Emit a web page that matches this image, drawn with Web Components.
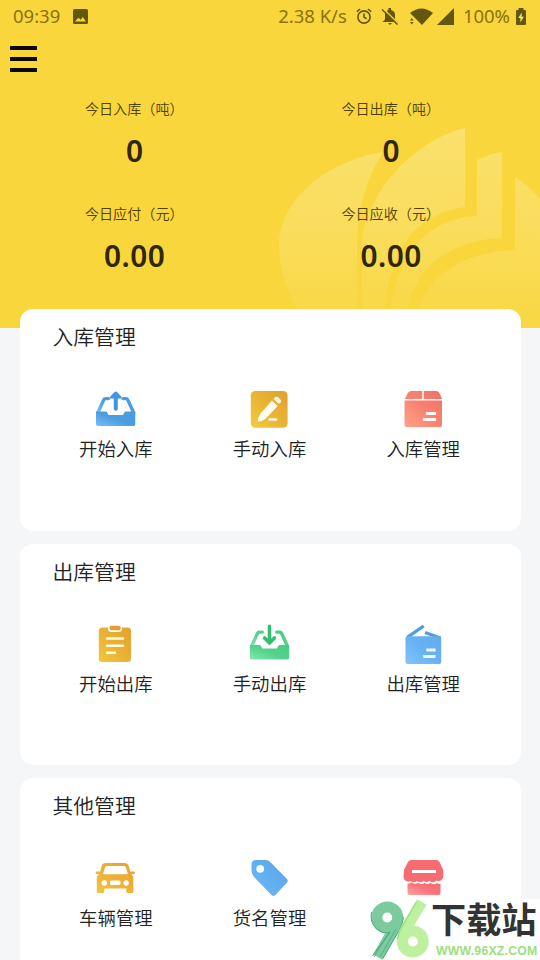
<!DOCTYPE html>
<html lang="zh-CN">
<head>
<meta charset="utf-8">
<title>库存管理</title>
<style>
html,body{margin:0;height:960px;overflow:hidden}
body{font-family:"Noto Sans","Noto Sans CJK SC",sans-serif;background:#f5f6f8;color:#222}
</style>
</head>
<body>
<warehouse-app></warehouse-app>
<script>
const define=(name,html,setup)=>customElements.define(name,class extends HTMLElement{
  constructor(){super();this.attachShadow({mode:'open'});const t=document.createElement('template');t.innerHTML=html;this.shadowRoot.append(t.content.cloneNode(true));}
  connectedCallback(){if(setup)setup(this,this.shadowRoot);}
});

const tray=`<path d="M109 398.600h-3q-1.300 0-1.800 1.300L98.200 413M123.500 398.600h3q1.300 0 1.800 1.300L134.300 413" fill="none" stroke="url(#g)" stroke-width="3.400" stroke-linecap="round"/><path d="M96.500 411.500H107l2 3.500h14.500l2-3.500H136V424q0 2-2 2H98.500q-2 0-2-2z" fill="url(#g)"/>`;
const icons={
 inbox:{box:'96 389 40 40',c:['#4a9de0','#4a9de0','#78bdf8'],g:tray+`<path d="M116.200 391.500q.8 0 1.500.8l4 4.300q1.200 2-1 2h-2.400v10.200q0 2-2 2t-2-2v-10.200h-2.500q-2.200 0-1-2l4-4.300q.6-.8 1.400-.8z" fill="#3f96e3"/>`},
 edit:{box:'250 389 40 40',c:['#e1a130','#e9b433','#f2cc3e'],g:`<rect x="251.300" y="391" width="36.800" height="36.800" rx="4.500" fill="url(#g)"/><path d="M272.500 400.500l5.700 5.600-12.400 12.900q-4 2.500-6.800 2.500-1 0-.7-1.500.8-3.700 2.700-6.500z" fill="#fffdf1"/><path d="M274 399l1.900-1.900q1.500-1 3 .5l2.100 2.100q1.200 1.200.3 2.500l-1.900 1.900z" fill="#fff8df"/><path d="M270 419.500h6.500" stroke="#fff7dc" stroke-width="2.500" stroke-linecap="round"/>`},
 box:{box:'403.300 389 40 40',c:['#ee7265','#fa8170','#ffa18b'],g:`<path d="M422 391v8h-17.500l3.200-6q1-2 3.300-2zM423.500 391H436q2.200 0 3.200 2l2.800 6h-18.500zM404.300 400.500h37.500V425q0 2-2 2h-33.500q-2 0-2-2z" fill="url(#g)"/><path d="M427 413.500h7.500M424 419.500h10.500" stroke="#fff7f3" stroke-width="2.800" stroke-linecap="square"/>`},
 clipboard:{box:'96 624 40 40',c:['#e4a22c','#eab033','#f0c840'],g:`<rect x="99.300" y="627.500" width="32.200" height="34.500" rx="3.500" fill="url(#g)"/><rect x="108.500" y="624" width="14" height="8" rx="3.500" fill="#fff"/><rect x="110" y="625.700" width="11.200" height="4.500" rx="2" fill="#e5a02b"/><path d="M107.500 638.500h16M107.500 645.700h16M107.500 652.700h8" stroke="#fffbdc" stroke-width="2.400" stroke-linecap="round"/>`},
 outbox:{box:'250 624 40 40',c:['#49cc80','#53d28b','#86e6ad'],g:`<g transform="translate(153.800 233.500)">${tray}<path d="M116.200 392.800v14M111.300 404.500l4.900 5 4.900-5" fill="none" stroke="#39bd70" stroke-width="3.600" stroke-linecap="round" stroke-linejoin="round"/></g>`},
 parcel:{box:'403.300 624 40 40',c:['#63acec','#68b2f3','#82c4ff'],g:`<path d="M407 637.300l16.500-11.300M424.800 632.500l15.500 5.500" fill="none" stroke="#529ddd" stroke-width="3.300"/><path d="M405.300 638q.4-1.700 2.200-1.700H439q2 0 2 2V662q0 1.900-2 1.900h-31.700q-2 0-2-2z" fill="url(#g)"/><path d="M427.500 650h6.500M424.500 656.500h9.500" stroke="#eef9ff" stroke-width="2.800" stroke-linecap="square"/>`},
 car:{box:'96 859 40 40',c:['#e7a131','#edb035','#f2c640'],g:`<path fill-rule="evenodd" fill="url(#g)" d="M107 864h18q3.400 0 4.200 3.200l1.600 5.200h3.500q1.300 0 1.300 1.300t-1.300 1.300H132l1.800 3V892.500q0 1.500-1.500 1.500h-4q-1.500 0-1.500-1.500v-3h-22v3q0 1.500-1.500 1.500h-4.500q-1.500 0-1.500-1.500V878l2-3h-2.200q-1.300 0-1.300-1.300t1.300-1.300h3.500l1.500-5.200q.8-3.200 4.200-3.200zm.5 3q-1.500 0-2 1.500l-1.700 5.700q-.3 1 1 1h22.400q1.300 0 1-1l-1.700-5.700q-.5-1.500-2-1.500zM104.800 881.200a2.800 2.800 0 1 0 .1 0zM126.600 881.200a2.800 2.800 0 1 0 .1 0zM112 881.500q-1.500 0-1.500 1.500v1.500q0 1.500 1.500 1.500h7.500q1.500 0 1.500-1.500V883q0-1.500-1.500-1.500z"/>`},
 tag:{box:'250 859 40 40',c:['#5aa3e3','#62aff0','#6cb6f5'],g:`<path d="M256.500 861h9.500q3 .2 4.700 1.900l16.600 16.900q1.800 1.800.2 3.700L276 896q-2 1.700-4 0l-17-17.500q-3-3.300-3-7v-6q0-4.500 4.500-4.500z" fill="url(#g)"/><circle cx="260.700" cy="869.800" r="3.900" fill="#f5ffff"/>`},
 store:{box:'403 859 40 40',c:['#f4686c','#fa747a','#ffa4a2'],g:`<path d="M411 861h25q2 0 3 2l3.500 7.500q1.500 6.500-.5 9.500-2 3-5.800 1.500-3.600 3.500-7.200.3-2.600 2.500-6 .3-3.500 2.500-6.800 0-3 2.500-6-.2-4.500 1.500-6.500-1.400-2-4 0-10L407.500 863q1.200-2 3.500-2z" fill="#f76c70"/><path d="M407 884.700q2.600.2 4.300-1.400 2.900 2.800 6.200.4 3.500 2.500 6.500 0 3 2.500 6 0 3.300 3 6.600.3 1.500 1 3.400.9V894q0 2-2 2h-29q-2 0-2-2z" fill="url(#g)"/><rect x="411.500" y="871" width="24" height="3" rx=".6" fill="#fff"/>`}
};

define('status-bar',`<style>
:host{display:flex;align-items:center;height:32px;box-sizing:border-box;padding:0 14px 0 13px;color:#89720f;font-size:18.500px;line-height:32px}
svg{display:block;fill:#65560f;flex:none}
.time{width:60px;letter-spacing:0}.space{flex:1}.speed{margin-right:9px}.icons{display:flex;gap:9px;align-items:center;margin-right:9px}.pct{margin-right:6px}
</style>
<span class="time">09:39</span>
<svg width="15" height="15" viewBox="0 0 15 15"><path fill-rule="evenodd" d="M1.500 0h12Q15 0 15 1.500v12q0 1.500-1.500 1.500h-12Q0 15 0 13.500v-12Q0 0 1.500 0zM2 12.500h11L9.800 8 7.700 10.700 5.400 8.700z"/></svg>
<span class="space"></span><span class="speed">2.38 K/s</span>
<div class="icons">
<svg width="16" height="16" viewBox="0 0 16 16" fill="none" style="fill:none;stroke:#65560f;stroke-width:1.600"><circle cx="8" cy="9" r="6.100"/><path d="M8 5.500V9l2.600 1.800M.8 3.600L4 1M15.200 3.600L12 1"/></svg>
<svg width="18" height="17" viewBox="0 0 18 17" style="margin-right:2px"><path d="M4 11.500V7q0-4 3.400-4.900V0h2.600v2.100Q14 3 14 7v4.500l2.500 2.500H1.500zM7.300 15h3.400q-.4 1.700-1.700 1.700T7.300 15z"/><path d="M2 .3l15.500 15.500" stroke="#f9d63b" stroke-width="1.500"/><path d="M1 1.500l15.500 15" stroke="#65560f" stroke-width="1.500"/></svg>
<svg width="23" height="17" viewBox="0 0 23 17"><path d="M0 5Q11.500-4 23 5L12 17z"/><path d="M-1 9.500h5.500V17H-1z" fill="#f9d63b"/><path d="M0 12.500l1.800-2.500 1.800 2.500zM0 14h3.600l-1.800 2.500z"/></svg>
<svg width="17" height="17" viewBox="0 0 17 17" style="margin-left:-5px"><path d="M17 0v17H0z"/></svg>
</div><span class="pct">100%</span>
<svg width="10" height="17" viewBox="0 0 10 17"><path d="M2.500 0h5v2H9q1 0 1 1v13q0 1-1 1H1q-1 0-1-1V3q0-1 1-1h1.500z"/><path d="M5.800 4.500L2.200 10h2.200v4.200L7.900 8.700H5.600z" fill="#f9e36b"/></svg>`);

define('stat-cell',`<style>
:host{display:block;text-align:center;height:105.300px}
.label{font-size:14.100px;line-height:20px;height:20px;color:#4f400a;white-space:nowrap;font-weight:350;transform:translateX(-.5px)}
.value{letter-spacing:.5px;line-height:36px;margin-top:14px;font-weight:600;color:#30260a;font-size:29.800px}
</style><div class="label"><slot name="label"></slot></div><div class="value"><slot></slot></div>`);

define('app-header',`<style>
:host{display:block;height:328px;position:relative;background:#f9d63b;overflow:hidden}
.art{position:absolute;inset:0}
.content{position:relative}
.menu{display:flex;flex-direction:column;gap:7px;margin:14px 0 0 10px;width:27px}
.menu i{display:block;height:4px;background:#0b0802}
.stats{display:grid;grid-template-columns:256.500px 256.500px;margin:27px 0 0 6.500px}
</style>
<svg class="art" width="540" height="328" viewBox="0 0 540 328"><defs><linearGradient id="f" gradientUnits="userSpaceOnUse" x1="0" y1="125" x2="0" y2="325"><stop stop-color="#fff" stop-opacity=".26"/><stop offset=".5" stop-color="#fff" stop-opacity=".17"/><stop offset="1" stop-color="#fff" stop-opacity=".04"/></linearGradient></defs>
<g fill="url(#f)"><path d="M383 152C323 162 278 202 279 248Q280 285 305 320H357V242Q358 192 383 152z"/><path d="M465 128C414 140 366 193 362 242V320H384C387 260 408 215 465 207z"/><path d="M477 160q12-6 25-8v86C454 240 412 264 405 320H389C394 266 418 219 477 216z"/><path d="M515 177q13 8 25 22V328H412C420 287 450 252 515 250z"/></g></svg>
<div class="content"><status-bar></status-bar><div class="menu"><i></i><i></i><i></i></div>
<div class="stats">
<stat-cell><span slot="label">今日入库（吨）</span>0</stat-cell>
<stat-cell><span slot="label">今日出库（吨）</span>0</stat-cell>
<stat-cell><span slot="label">今日应付（元）</span>0.00</stat-cell>
<stat-cell><span slot="label">今日应收（元）</span>0.00</stat-cell>
</div></div>`);

define('menu-item',`<style>
:host{display:flex;flex-direction:column;align-items:center}
.icon{width:40px;height:40px}svg{display:block}
.label{font-size:18.400px;line-height:26px;margin-top:7px;white-space:nowrap;font-weight:350}
</style><div class="icon"></div><div class="label"><slot></slot></div>`,(host,root)=>{
 const i=icons[host.getAttribute('icon')];
 root.querySelector('.icon').innerHTML=`<svg width="40" height="40" viewBox="${i.box}"><defs><linearGradient id="g" x1="1" y1="0" x2="0" y2="1"><stop stop-color="${i.c[0]}"/><stop offset=".5" stop-color="${i.c[1]}"/><stop offset="1" stop-color="${i.c[2]}"/></linearGradient></defs>${i.g}</svg>`;
});

define('menu-card',`<style>
:host{display:block;height:221.500px;box-sizing:border-box;background:#fff;border-radius:13px;padding:13px 20px 0}
.title{font-size:20.800px;line-height:30px;padding-left:13px;font-weight:350}
.items{display:grid;grid-template-columns:repeat(3,1fr);margin-top:37px;transform:translateX(-.5px)}
</style><div class="title"><slot name="title"></slot></div><div class="items"><slot></slot></div>`);

define('site-badge',`<style>
:host{position:absolute;right:0;bottom:0;width:170px;height:61px;background:#fff;display:flex}
svg{flex:none}
.words{display:flex;flex-direction:column;width:109px;margin-left:1px}
.name{font-size:35.200px;line-height:41px;font-weight:700;color:#333;height:41px;white-space:nowrap;width:108px}
.url{font:bold 12.300px/16px "Liberation Sans",Arial,sans-serif;color:#9be080;letter-spacing:.2px;margin:3px 0 0 5px;white-space:nowrap;height:16px}
</style><svg width="60" height="61" viewBox="370 899 60 61" fill="none"><g stroke="#7ccb9e" stroke-width="11"><circle cx="387.300" cy="917.500" r="10.500"/><path d="M397.800 917.500q0 5-3 10l-17 29.500"/></g><g stroke="#50a779" stroke-width="1"><path d="M403.300 917q0 6-4 13l-16.500 28.500M371.500 912q-2 10 5 17 6 5 13 4l-17 23"/><path d="M390 931l-16 26M396 929l-16 28" stroke-width=".8"/></g><g stroke="#bdf09f" stroke-width="11"><circle cx="412.800" cy="941.500" r="10.500"/><path d="M402.800 937q1-5 4-10l15-25"/></g><path d="M397.500 939q1-7 5-13l14-24" stroke="#8fd681" stroke-width="1"/></svg><div class="words"><div class="name"><slot name="name"></slot></div><div class="url"><slot></slot></div></div>`);

define('warehouse-app',`<style>
:host{display:block;position:relative;width:540px;height:960px;overflow:hidden}
main{display:flex;flex-direction:column;gap:13px;margin:-19px 19.500px 0;position:relative}
</style><app-header></app-header><main>
<menu-card><span slot="title">入库管理</span><menu-item icon="inbox">开始入库</menu-item><menu-item icon="edit">手动入库</menu-item><menu-item icon="box">入库管理</menu-item></menu-card>
<menu-card><span slot="title">出库管理</span><menu-item icon="clipboard">开始出库</menu-item><menu-item icon="outbox">手动出库</menu-item><menu-item icon="parcel">出库管理</menu-item></menu-card>
<menu-card><span slot="title">其他管理</span><menu-item icon="car">车辆管理</menu-item><menu-item icon="tag">货名管理</menu-item><menu-item icon="store"></menu-item></menu-card>
</main><site-badge><span slot="name">下载站</span>WWW.96XZ.COM</site-badge>`);
</script>
</body>
</html>
